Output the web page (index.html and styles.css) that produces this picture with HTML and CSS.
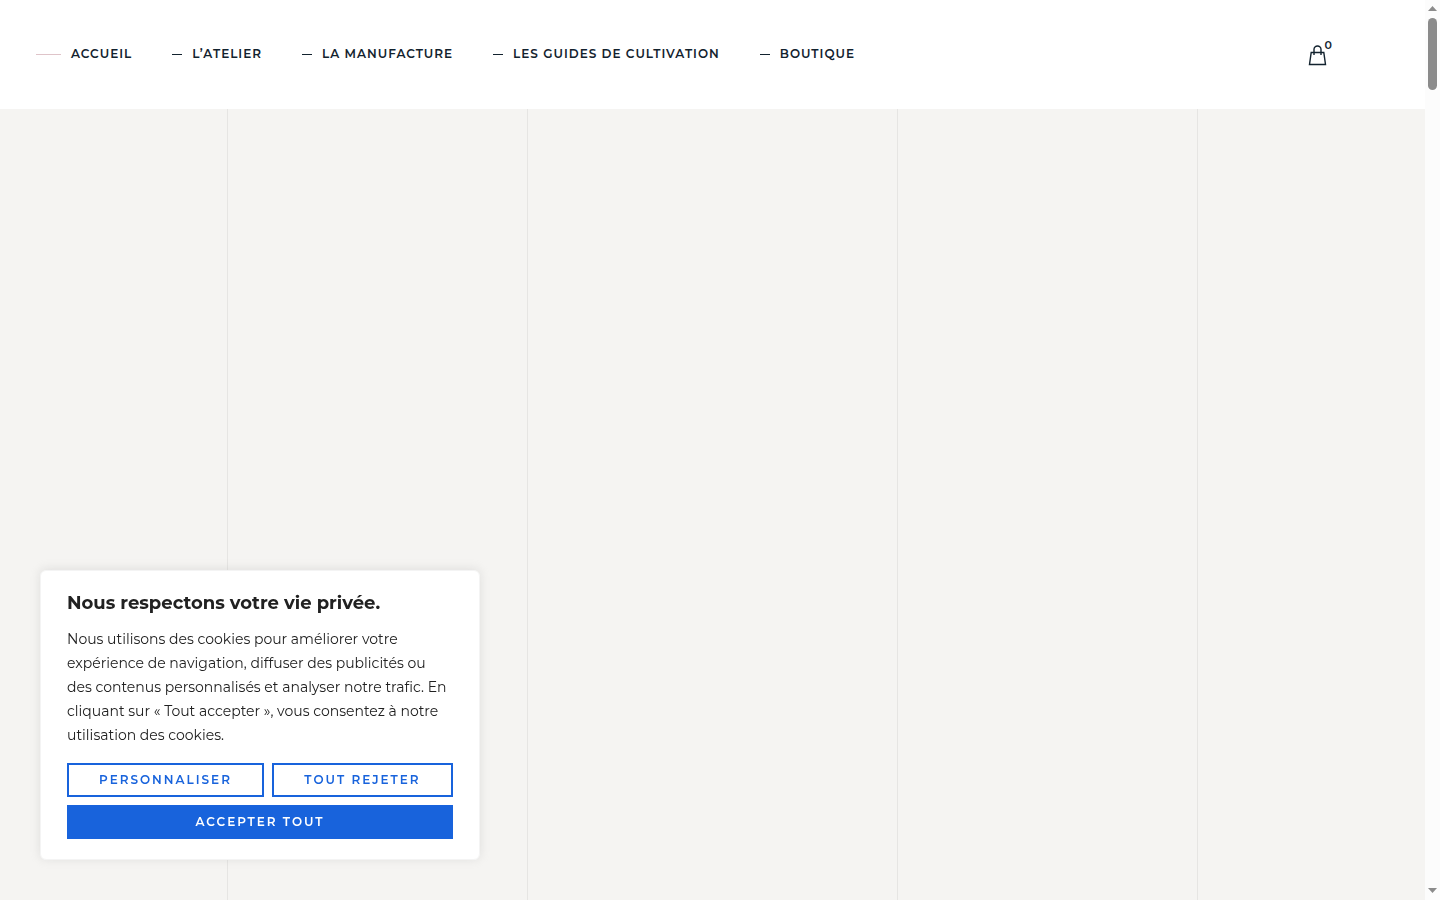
FILE: index.html
```html
<!DOCTYPE html>
<html lang="fr">
<head>
<meta charset="utf-8">
<meta name="viewport" content="width=device-width, initial-scale=1">
<title>Accueil</title>
<link rel="stylesheet" href="styles.css">
</head>
<body>
<div class="page">
  <header class="header">
    <nav class="nav">
      <a class="nav-link active" href="#">ACCUEIL</a>
      <a class="nav-link" href="#">L’ATELIER</a>
      <a class="nav-link" href="#">LA MANUFACTURE</a>
      <a class="nav-link" href="#">LES GUIDES DE CULTIVATION</a>
      <a class="nav-link" href="#">BOUTIQUE</a>
    </nav>
    <a class="cart" href="#" aria-label="Panier, 0 article">
      <svg width="20" height="22" viewBox="0 0 20 22" fill="none" stroke="#12222e" stroke-width="1.4"><path d="M3.200 8.500h12.600l1.700 12H1.500z"/><path d="M6 11V5.500a3.500 3.500 0 0 1 7 0V11"/></svg>
      <span class="count">0</span>
    </a>
  </header>
  <main class="lines"><span></span><span></span><span></span><span></span></main>
</div>
<div class="scrollbar" aria-hidden="true">
  <svg width="9" height="5" viewBox="0 0 9 5"><path d="M0 5 4.5 0 9 5z" fill="#8b8b8b"/></svg>
  <div class="track"><div class="thumb"></div></div>
  <svg width="9" height="5" viewBox="0 0 9 5"><path d="M0 0h9L4.500 5z" fill="#8b8b8b"/></svg>
</div>
<section class="consent" aria-labelledby="consent-title">
  <h2 id="consent-title">Nous respectons votre vie privée.</h2>
  <p>Nous utilisons des cookies pour améliorer votre expérience de navigation, diffuser des publicités ou des contenus personnalisés et analyser notre trafic. En cliquant sur «&nbsp;Tout accepter&nbsp;», vous consentez à notre utilisation des cookies.</p>
  <div class="actions">
    <button type="button" class="btn">PERSONNALISER</button>
    <button type="button" class="btn">TOUT REJETER</button>
    <button type="button" class="btn primary">ACCEPTER TOUT</button>
  </div>
</section>
</body>
</html>
```

FILE: styles.css
```css
* { box-sizing: border-box; }
body {
  margin: 0;
  min-height: 100vh;
  display: flex;
  font-family: Montserrat, Inter, sans-serif;
  background: #fff;
  color: #12222e;
}
.page { flex: 1; display: flex; flex-direction: column; }
.header {
  display: flex;
  align-items: center;
  justify-content: space-between;
  padding: 42px 93px 43px 36px;
  background: #fff;
}
.nav { display: flex; gap: 40px; }
.nav-link {
  display: flex;
  gap: 10px;
  font-size: 12px;
  line-height: 24px;
  font-weight: 600;
  letter-spacing: 1px;
  color: #12222e;
  text-decoration: none;
  white-space: nowrap;
}
.nav-link::before { content: ""; width: 10px; height: 1px; margin-top: 12px; background: #12222e; }
.nav-link.active::before { width: 25px; background: #dfc4c9; }
.cart { display: flex; align-items: flex-start; color: #12222e; text-decoration: none; }
.cart svg { margin-top: 2px; }
.cart .count { font-size: 11px; line-height: 12px; font-weight: 600; margin-top: -3px; margin-left: -3px; }
.lines {
  flex: 1;
  display: grid;
  grid-template-columns: 300px 370px 300px 1px;
  justify-content: center;
  background: #f5f4f2;
}
.lines span { border-left: 1px solid #e6e5e3; }
.scrollbar {
  width: 15px;
  display: flex;
  flex-direction: column;
  align-items: center;
  padding: 6px 0 7px;
  gap: 7px;
  background: #fcfcfc;
}
.track { flex: 1; }
.thumb { width: 9px; height: 72px; border-radius: 5px; background: #8b8b8b; }
.consent {
  position: fixed;
  left: 40px;
  bottom: 40px;
  width: 440px;
  padding: 20px 26px;
  border: 1px solid #f4f4f4;
  border-radius: 6px;
  background: #fff;
  box-shadow: 0 -1px 10px rgba(172, 171, 171, 0.3);
  color: #212121;
}
.consent h2 { margin: 0 0 11px; font-size: 18px; line-height: 25px; font-weight: 700; }
.consent p { margin: 0 0 16px; font-size: 14px; line-height: 24px; }
.actions { display: grid; grid-template-columns: 197fr 181fr; gap: 8px; }
.btn {
  height: 34px;
  padding: 0 0 2px;
  border: 2px solid #1863dc;
  background: #fff;
  color: #1863dc;
  font-family: inherit;
  font-size: 12px;
  font-weight: 600;
  letter-spacing: 2px;
}
.btn.primary { grid-column: 1 / -1; background: #1863dc; color: #fff; }
```
